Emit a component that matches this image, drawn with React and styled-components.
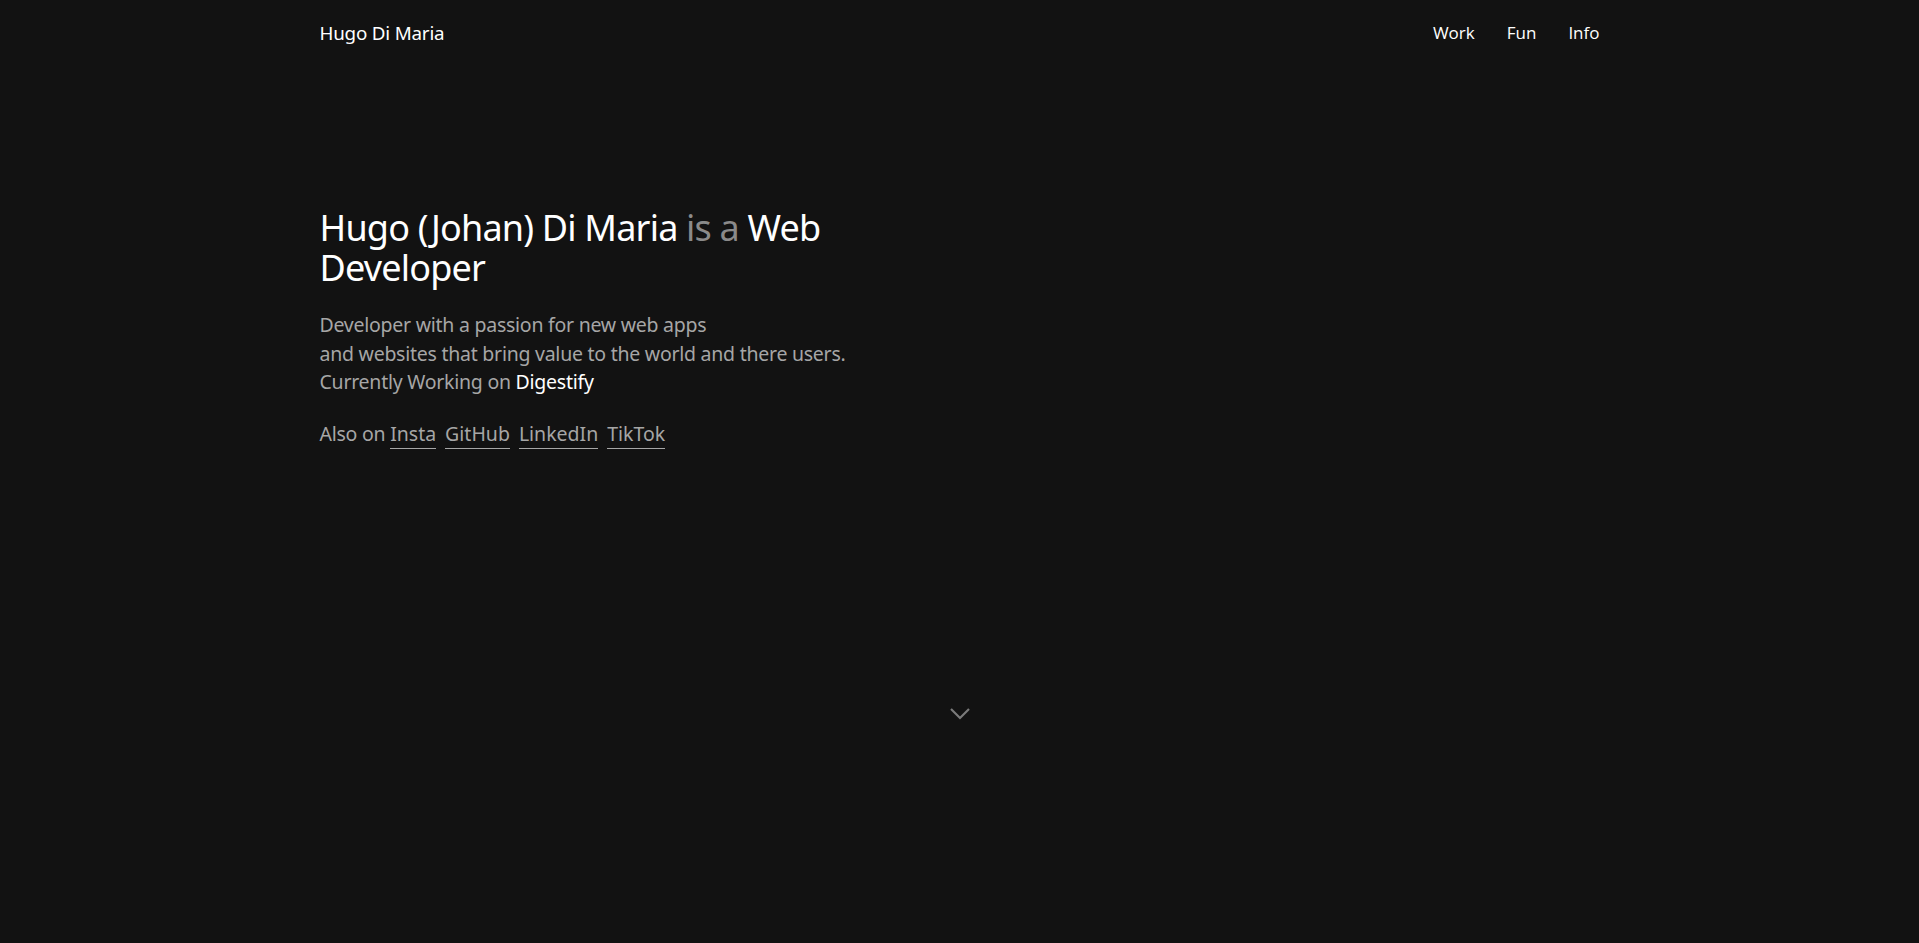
import React from 'react'
import styled, { createGlobalStyle } from 'styled-components'

const GlobalStyle = createGlobalStyle`
    html, body {
        margin: 0;
        padding: 0;
        background-color: #121212;
        color: #ffffff;
        font-family: "Noto Sans", "Open Sans", sans-serif;
    }
    a {
        color: inherit;
        text-decoration: none;
    }
`

const Page = styled.div`
    min-height: 943px;
    display: flex;
    flex-direction: column;
`

const Header = styled.header`
    width: 1280px;
    margin: 0 auto;
    height: 66px;
    display: flex;
    align-items: center;
    justify-content: space-between;
`

const Logo = styled.a`
    font-size: 18.8px;
    letter-spacing: -0.2px;
    color: #ffffff;
`

const Nav = styled.nav`
    display: flex;
    gap: 32px;
    margin-top: -2px;
    a {
        font-family: "Open Sans", sans-serif;
        font-size: 17px;
        color: #ffffff;
    }
`

const Hero = styled.section`
    width: 1280px;
    margin: 0 auto;
    padding-top: 142px;
    height: 641px;
    box-sizing: border-box;
`

const Title = styled.h1`
    margin: 0;
    font-weight: 400;
    font-size: 36px;
    line-height: 40px;
    letter-spacing: -0.8px;
    max-width: 560px;
    color: #ffffff;
    .muted {
        color: #8a8a8a;
    }
`

const Text = styled.p`
    margin: ${props => props.gap || 24}px 0 0;
    font-size: 19.5px;
    line-height: 28.5px;
    color: #a6a6a6;
    letter-spacing: -0.25px;
    .hl {
        color: #ffffff;
    }
`

const SocialLink = styled.a`
    color: #a6a6a6;
    border-bottom: 1.5px solid #a6a6a6;
    padding-bottom: 1px;
    margin-right: 9px;
    letter-spacing: 0;
`

const ArrowWrap = styled.div`
    display: flex;
    justify-content: center;
    color: #7a7a7a;
`

const links = ['Insta', 'GitHub', 'LinkedIn', 'TikTok']

const App = () => {
    return (
        <Page>
            <GlobalStyle />
            <Header>
                <Logo href="#">Hugo Di Maria</Logo>
                <Nav>
                    <a href="#">Work</a>
                    <a href="#">Fun</a>
                    <a href="#">Info</a>
                </Nav>
            </Header>
            <Hero>
                <Title>
                    Hugo (Johan) Di Maria <span className="muted">is a</span> Web Developer
                </Title>
                <Text gap={23}>
                    Developer with a passion for new web apps<br />
                    and websites that bring value to the world and there users.<br />
                    Currently Working on <span className="hl">Digestify</span>
                </Text>
                <Text gap={23}>
                    Also on {links.map(l => (
                        <SocialLink href="#" key={l}>{l}</SocialLink>
                    ))}
                </Text>
            </Hero>
            <ArrowWrap>
                <svg width="22" height="14" viewBox="0 0 22 14" fill="none">
                    <path d="M2 2 L11 11 L20 2" stroke="currentColor" strokeWidth="2.2" />
                </svg>
            </ArrowWrap>
        </Page>
    )
}

export default App
